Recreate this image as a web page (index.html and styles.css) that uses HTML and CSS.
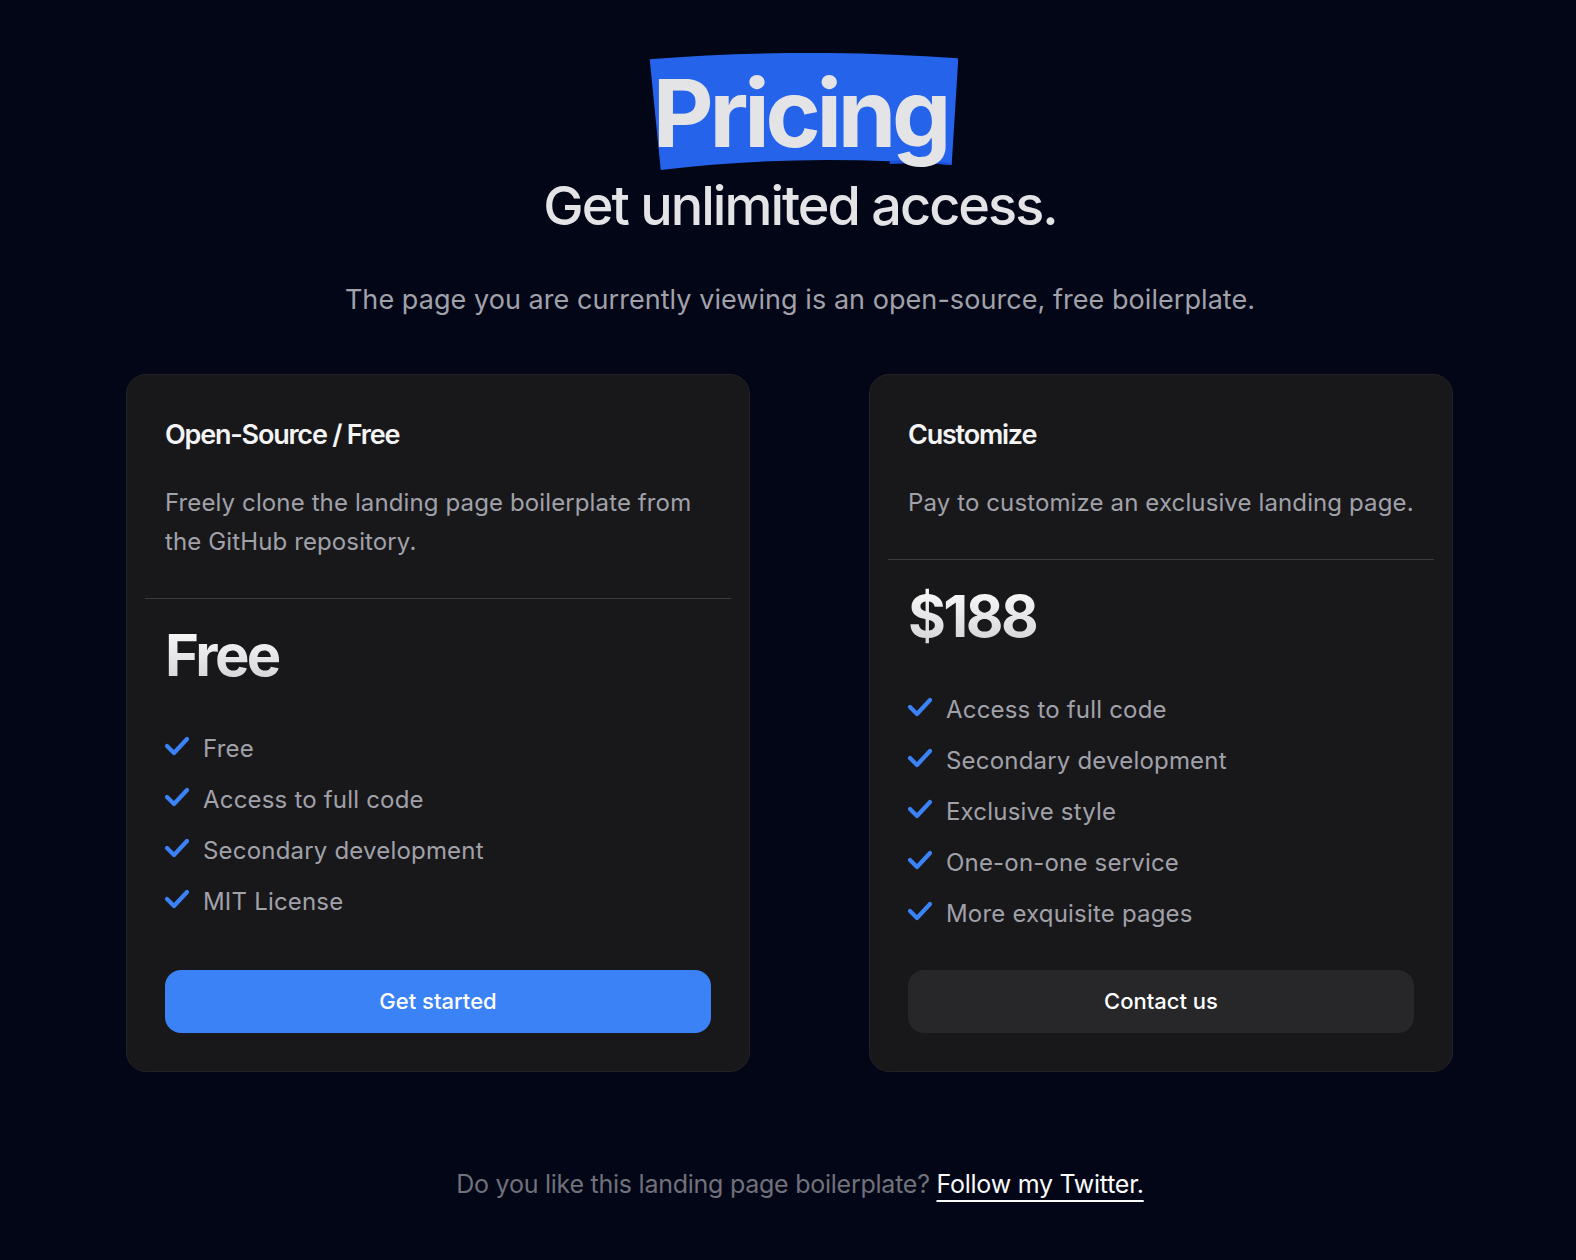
FILE: index.html
```html
<!DOCTYPE html>
<html lang="en">
<head>
<meta charset="utf-8">
<title>Pricing</title>
<link rel="stylesheet" href="styles.css">
</head>
<body>
<main class="page">
  <header class="hero">
    <h1 class="hero-title">
      <span class="highlight">
        <svg class="highlight-bg" viewBox="0 0 308 117" preserveAspectRatio="none" aria-hidden="true">
          <path d="M0.7 6.3 Q150 -6 308.3 5.3 L301.7 112 Q150 100 11.7 117 Z" fill="#2563eb"/>
          <path d="M240 111 Q275 109 301.7 112 L300 110 Q270 106 240 108 Z" fill="#1d4ed8"/>
        </svg>
        <span class="highlight-text">Pricing</span>
      </span>
    </h1>
    <h2 class="hero-sub">Get unlimited access.</h2>
    <p class="hero-desc">The page you are currently viewing is an open-source, free boilerplate.</p>
  </header>

  <section class="plans">
    <article class="card">
      <div class="card-head">
        <h3 class="card-title">Open-Source / Free</h3>
        <p class="card-desc">Freely clone the landing page boilerplate from the GitHub repository.</p>
      </div>
      <div class="divider"></div>
      <div class="card-body">
        <div class="price">Free</div>
        <ul class="features">
          <li><svg class="check" viewBox="0 0 26 20"><polyline points="3,10 10,17 23,3"/></svg>Free</li>
          <li><svg class="check" viewBox="0 0 26 20"><polyline points="3,10 10,17 23,3"/></svg>Access to full code</li>
          <li><svg class="check" viewBox="0 0 26 20"><polyline points="3,10 10,17 23,3"/></svg>Secondary development</li>
          <li><svg class="check" viewBox="0 0 26 20"><polyline points="3,10 10,17 23,3"/></svg>MIT License</li>
        </ul>
        <a class="btn btn-primary" href="#">Get started</a>
      </div>
    </article>

    <article class="card">
      <div class="card-head">
        <h3 class="card-title">Customize</h3>
        <p class="card-desc">Pay to customize an exclusive landing page.</p>
      </div>
      <div class="divider"></div>
      <div class="card-body">
        <div class="price">$188</div>
        <ul class="features">
          <li><svg class="check" viewBox="0 0 26 20"><polyline points="3,10 10,17 23,3"/></svg>Access to full code</li>
          <li><svg class="check" viewBox="0 0 26 20"><polyline points="3,10 10,17 23,3"/></svg>Secondary development</li>
          <li><svg class="check" viewBox="0 0 26 20"><polyline points="3,10 10,17 23,3"/></svg>Exclusive style</li>
          <li><svg class="check" viewBox="0 0 26 20"><polyline points="3,10 10,17 23,3"/></svg>One-on-one service</li>
          <li><svg class="check" viewBox="0 0 26 20"><polyline points="3,10 10,17 23,3"/></svg>More exquisite pages</li>
        </ul>
        <a class="btn btn-dark" href="#">Contact us</a>
      </div>
    </article>
  </section>

  <footer class="footer">
    <p>Do you like this landing page boilerplate? <a href="#" class="footer-link">Follow my Twitter.</a></p>
  </footer>
</main>
</body>
</html>
```

FILE: styles.css
```css
* {
  box-sizing: border-box;
}

html, body {
  margin: 0;
  padding: 0;
  background: #020617;
}

body {
  font-family: Inter, "Noto Sans", "Liberation Sans", sans-serif;
  color: #e4e4e7;
  min-height: 1260px;
}

.page {
  display: flex;
  flex-direction: column;
  align-items: center;
  padding-top: 66px;
}

.hero {
  display: flex;
  flex-direction: column;
  align-items: center;
  padding-left: 24px;
}

.hero-title {
  margin: 0;
  font-size: 94px;
  line-height: 1;
  font-weight: 700;
  letter-spacing: -0.045em;
  color: #e4e4e7;
}

.highlight {
  position: relative;
  display: inline-block;
}

.highlight-bg {
  position: absolute;
  left: -4px;
  top: -13px;
  width: 309px;
  height: 117px;
  z-index: 0;
}

.highlight-text {
  position: relative;
  z-index: 1;
}

.hero-sub {
  margin: 14px 0 0;
  font-size: 54px;
  line-height: 1.2;
  font-weight: 500;
  letter-spacing: -0.037em;
  color: #e4e4e7;
}

.hero-desc {
  margin: 41px 0 0;
  font-size: 27px;
  line-height: 39px;
  color: #a1a1aa;
  letter-spacing: 0.002em;
}

.plans {
  display: grid;
  grid-template-columns: 624px 584px;
  column-gap: 119px;
  margin-top: 55px;
  padding-left: 3px;
}

.card {
  display: flex;
  flex-direction: column;
  background: #18181b;
  border: 1px solid #232326;
  border-radius: 20px;
  padding: 18px;
}

.card-head {
  padding: 24px 20px 37px;
}

.card-title {
  margin: 0;
  font-size: 27px;
  line-height: 36px;
  font-weight: 600;
  letter-spacing: -0.045em;
  color: #f4f4f5;
}

.card-desc {
  margin: 30px 0 0;
  font-size: 24px;
  line-height: 39px;
  color: #a1a1aa;
  letter-spacing: 0.005em;
}

.divider {
  height: 1px;
  background: #3a3a3f;
}

.card-body {
  flex: 1;
  display: flex;
  flex-direction: column;
  padding: 27px 20px 20px;
}

.price {
  font-size: 58px;
  line-height: 58px;
  font-weight: 700;
  letter-spacing: -0.045em;
  background: linear-gradient(180deg, #fafafa 0%, #d4d4d8 100%);
  -webkit-background-clip: text;
  background-clip: text;
  color: transparent;
  align-self: flex-start;
}

.features {
  list-style: none;
  margin: 45px 0 37px;
  padding: 0;
  display: flex;
  flex-direction: column;
  gap: 12px;
}

.features li {
  display: flex;
  align-items: center;
  font-size: 24px;
  line-height: 39px;
  color: #a1a1aa;
  letter-spacing: 0.008em;
}

.check {
  width: 26px;
  height: 20px;
  margin-left: -1px;
  margin-right: 13px;
  margin-top: -4px;
  flex: none;
}

.check polyline {
  fill: none;
  stroke: #3b82f6;
  stroke-width: 4.2;
  stroke-linecap: round;
  stroke-linejoin: round;
}

.btn {
  margin-top: auto;
  display: flex;
  align-items: center;
  justify-content: center;
  height: 63px;
  border-radius: 16px;
  font-size: 22px;
  font-weight: 500;
  color: #ffffff;
  text-decoration: none;
}

.btn-primary {
  background: #3b82f6;
}

.btn-dark {
  background: #27272a;
}

.footer {
  margin-top: 94px;
  padding-left: 24px;
}

.footer p {
  margin: 0;
  font-size: 25px;
  line-height: 36px;
  color: #71717a;
  letter-spacing: -0.01em;
}

.footer-link {
  color: #fafafa;
  text-decoration: underline;
  text-decoration-thickness: 2px;
  text-underline-offset: 7px;
}
```
